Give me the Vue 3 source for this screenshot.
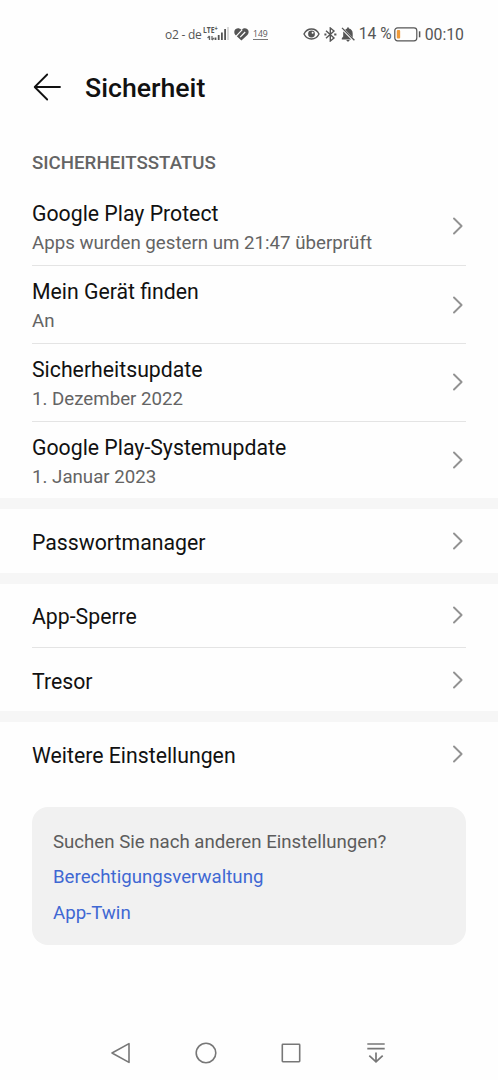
<script setup>
import { ref } from 'vue'

const sections = ref([
  {
    id: 'status',
    title: 'SICHERHEITSSTATUS',
    items: [
      { title: 'Google Play Protect', summary: 'Apps wurden gestern um 21:47 überprüft' },
      { title: 'Mein Gerät finden', summary: 'An' },
      { title: 'Sicherheitsupdate', summary: '1. Dezember 2022' },
      { title: 'Google Play-Systemupdate', summary: '1. Januar 2023' }
    ]
  },
  { id: 'passwords', items: [{ title: 'Passwortmanager' }] },
  { id: 'apps', items: [{ title: 'App-Sperre' }, { title: 'Tresor' }] },
  { id: 'more', items: [{ title: 'Weitere Einstellungen' }] }
])

const links = ['Berechtigungsverwaltung', 'App-Twin']
const battery = ref(14)
</script>

<template>
  <div class="screen">
    <div class="status-bar">
      <div class="status-left">
        <span class="carrier">o2 - de</span>
        <!-- signal -->
        <div class="signal">
          <span class="lte">LTE<sup>+</sup></span>
          <svg width="27" height="16" viewBox="0 0 27 16">
            <path d="M7.5 10v4M5.6 12L7.5 10M10 10v4M10 14l2-2" stroke="#666" stroke-width="1.3" fill="none" />
            <path d="M13.5 11.5V14M16.7 9V14M19.9 6.5V14M23.1 3V14" stroke="#555" stroke-width="1.8" />
            <path d="M26 1V14" stroke="#d0d0d0" stroke-width="1.6" />
          </svg>
        </div>
        <svg class="health" width="15" height="13" viewBox="0 0 15 13">
          <path d="M7.4 12.6L1.4 7C-.3 5.2 0 2.4 1.8 1.1 3.5-.1 5.7.2 7.3 1.9 8.9.2 11.6-.2 13.2 1.1c1.9 1.5 1.9 4.3.2 6z" fill="#555" />
          <path d="M1.7 8.6L8.3 1.6M6.2 9.1l5-5.1" fill="none" stroke="#fff" stroke-width="1.2" />
        </svg>
        <span class="steps">149</span>
      </div>
      <div class="status-right">
        <svg width="17" height="14" viewBox="0 0 17 14">
          <path d="M1 7C4.3.3 12.7.3 16 7 12.7 13.7 4.3 13.7 1 7z" fill="none" stroke="#555" stroke-width="1.4" />
          <circle cx="8.5" cy="7" r="3.4" fill="#555" />
          <circle cx="9.6" cy="5.8" r="1" fill="#fff" />
        </svg>
        <svg class="bluetooth" width="13" height="15" viewBox="0 0 13 15">
          <path d="M2 3.8l8 7.2-3.7 3V1L10 4l-8 7.2" fill="none" stroke="#555" stroke-width="1.4" />
          <path d="M.4 7.5h2M10.2 7.5h2.2" stroke="#555" stroke-width="1.8" />
        </svg>
        <svg class="muted" width="14" height="15" viewBox="0 0 14 15">
          <path d="M4.2 2.8C4.8 2.2 5.4 1.8 6.1 1.6V.6h1.8v1c2.4.5 3.8 2.3 3.8 4.8v4zM2.4 4.6l7.8 7.8H.8v-1.2l1.4-1.6V6.4c0-.7 0-1.300.2-1.800zM5.4 13h3.2c0 .9-.8 1.5-1.600 1.500S5.400 13.900 5.400 13z" fill="#555" />
          <path d="M1 .9l12.400 12.400" stroke="#555" stroke-width="1.3" />
        </svg>
        <span class="percent">{{ battery }} %</span>
        <svg class="battery" width="27" height="15" viewBox="0 0 27 15">
          <rect x=".8" y=".8" width="22" height="13" rx="2.8" fill="none" stroke="#555" stroke-width="1.2" />
          <rect x="2.8" y="3" :width="battery * 0.24" height="8.6" rx="1" fill="#ee9a3a" />
          <path d="M25.6 4.3v6" stroke="#555" stroke-width="1.5" />
        </svg>
        <span class="clock">00:10</span>
      </div>
    </div>

    <header class="app-bar">
      <svg width="28" height="28" viewBox="0 0 28 28">
        <path d="M14.2 1.5L1.7 14l12.5 12.5M2 14h25" fill="none" stroke="#111" stroke-width="1.8" stroke-linecap="round" stroke-linejoin="round" />
      </svg>
      <h1>Sicherheit</h1>
    </header>

    <main>
      <section v-for="section in sections" :key="section.id" class="section">
        <h2 v-if="section.title">{{ section.title }}</h2>
        <div
          v-for="item in section.items"
          :key="item.title"
          class="row"
          :class="{ 'two-line': item.summary }"
        >
          <div class="row-text">
            <div class="row-title">{{ item.title }}</div>
            <div v-if="item.summary" class="row-summary">{{ item.summary }}</div>
          </div>
          <svg class="chevron" width="12" height="18" viewBox="0 0 12 18">
            <path d="M2 1.5L9.6 9 2 16.5" fill="none" stroke="#929292" stroke-width="1.9" stroke-linecap="round" stroke-linejoin="round" />
          </svg>
        </div>
      </section>

      <div class="suggestions">
        <p>Suchen Sie nach anderen Einstellungen?</p>
        <a v-for="link in links" :key="link">{{ link }}</a>
      </div>
    </main>

    <nav class="nav-bar">
      <svg width="24" height="24" viewBox="0 0 24 24">
        <path d="M20 2.6v18.8L3 12z" fill="none" stroke="#777" stroke-width="1.6" stroke-linejoin="round" />
      </svg>
      <svg width="24" height="24" viewBox="0 0 24 24">
        <circle cx="12" cy="12" r="9.8" fill="none" stroke="#777" stroke-width="1.6" />
      </svg>
      <svg width="24" height="24" viewBox="0 0 24 24">
        <rect x="3.3" y="3.3" width="17.4" height="17.4" rx=".6" fill="none" stroke="#777" stroke-width="1.6" />
      </svg>
      <svg width="24" height="24" viewBox="0 0 24 24">
        <path d="M3.3 3h17.4M3.3 7.7h17.4M12 11.5v9M5.3 14.6l6.7 6.3 6.7-6.3" fill="none" stroke="#777" stroke-width="1.7" />
      </svg>
    </nav>
  </div>
</template>

<style>
body {
  background: #fefefe;
}
</style>

<style scoped>
.screen {
  box-sizing: border-box;
  display: flex;
  flex-direction: column;
  height: 1080px;
  overflow: hidden;
  background: #fefefe;
  color: #111;
  font-family: Roboto, sans-serif;
}

.status-bar {
  display: flex;
  justify-content: space-between;
  align-items: center;
  height: 24px;
  padding: 22px 34px 0 165px;
  color: #555;
}

.status-left,
.status-right {
  display: flex;
  align-items: center;
}

.carrier {
  width: 36px;
  font-family: 'Open Sans', sans-serif;
  font-size: 12px;
  letter-spacing: -0.25px;
  white-space: nowrap;
}

.signal {
  position: relative;
  height: 16px;
  margin-left: 1px;
}

.signal svg {
  display: block;
}

.lte {
  position: absolute;
  top: 0;
  left: 0.5px;
  font-family: 'Open Sans', sans-serif;
  font-size: 8.5px;
  font-weight: 700;
  line-height: 8px;
  transform: scaleX(0.8);
  transform-origin: left;
}

.lte sup {
  font-size: 7px;
  line-height: 0;
  vertical-align: 2px;
}

.health {
  margin-left: 5px;
}

.steps {
  margin-left: 4px;
  border-bottom: 1px solid #777;
  font-family: 'Open Sans', sans-serif;
  font-size: 8.6px;
  line-height: 10px;
}

.bluetooth {
  margin-left: 4px;
}

.muted {
  margin-left: 4px;
}

.percent {
  margin-left: 4px;
  font-size: 15.6px;
}

.battery {
  margin-left: 2px;
}

.clock {
  margin-left: 4px;
  font-size: 15.8px;
}

.app-bar {
  display: flex;
  align-items: center;
  gap: 24px;
  height: 64px;
  margin-top: 9px;
  padding: 0 33px;
}

.app-bar h1 {
  margin: 0;
  padding-top: 1px;
  font-size: 26.7px;
  font-weight: 500;
}

.section + .section::before {
  content: '';
  display: block;
  height: 10.7px;
  background: #f6f6f6;
}

.section h2 {
  height: 40.4px;
  margin: 0;
  padding: 28px 32px 0;
  color: #646464;
  font-size: 18.7px;
  font-weight: 500;
  line-height: 33px;
}

.section:first-child {
  height: 379.4px;
}

.row {
  display: flex;
  justify-content: space-between;
  align-items: center;
  box-sizing: border-box;
  height: 63.8px;
  margin: 0 32px;
  padding-right: 2px;
}

.row.two-line {
  height: 77.8px;
}

.row + .row {
  border-top: 1px solid #e4e4e4;
}

.row-text {
  padding-top: 2.6px;
}

.two-line .row-text {
  padding-top: 5.4px;
}

.row-title {
  font-size: 21.25px;
  line-height: 29px;
}

.row-summary {
  color: #646464;
  font-size: 18.7px;
  line-height: 31px;
}

.suggestions {
  display: flex;
  flex-direction: column;
  box-sizing: border-box;
  height: 138px;
  margin: 21.3px 32px 0;
  padding: 17.6px 21px;
  border-radius: 16px;
  background: #f1f1f1;
  font-size: 18.65px;
  line-height: 35.6px;
}

.suggestions p {
  margin: 0;
  color: #5c5c5c;
}

.suggestions a {
  color: #3f68d3;
}

.nav-bar {
  display: flex;
  justify-content: center;
  gap: 61px;
  margin-top: auto;
  padding: 0 1.4px 15px 0;
}
</style>
